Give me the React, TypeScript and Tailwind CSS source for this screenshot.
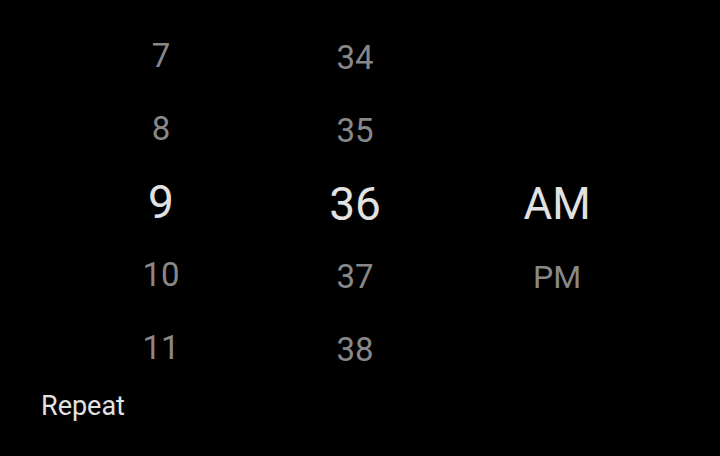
import React from "react";

// Time picker: hour / minute / am-pm wheels, "Repeat" label below

const hours = [7, 8, 9, 10, 11];
const minutes = [34, 35, 36, 37, 38];

const Row = ({ value, selected }: { value: string; selected: boolean }) => (
  <div
    className={`h-[73px] flex items-center justify-center leading-none ${
      selected ? "text-[46px] text-[#e2e2e2]" : "text-[33px] text-[#888888]"
    }`}
  >
    {value}
  </div>
);

const App = () => {
  return (
    <div
      className="w-[720px] h-[456px] bg-black overflow-hidden"
      style={{ fontFamily: "Roboto, 'Noto Sans', sans-serif" }}
    >
      <div className="flex pl-[101px] h-[386px]">
        <div className="w-[120px] pt-[19px]">
          {hours.map((h) => (
            <Row key={h} value={String(h)} selected={h === 9} />
          ))}
        </div>
        <div className="w-[120px] ml-[74px] pt-[21px]">
          {minutes.map((m) => (
            <Row key={m} value={String(m)} selected={m === 36} />
          ))}
        </div>
        <div className="w-[120px] ml-[82px] pt-[21px]">
          <div className="h-[146px]" />
          <div className="h-[73px] flex items-center justify-center leading-none text-[44px] text-[#e2e2e2]">
            AM
          </div>
          <div className="h-[73px] flex items-center justify-center leading-none text-[32px] text-[#888888]">
            PM
          </div>
        </div>
      </div>
      <div className="mt-[7px] pl-[41px] text-[27px] leading-none text-[#e2e2e2]">
        Repeat
      </div>
    </div>
  );
};

export default App;
